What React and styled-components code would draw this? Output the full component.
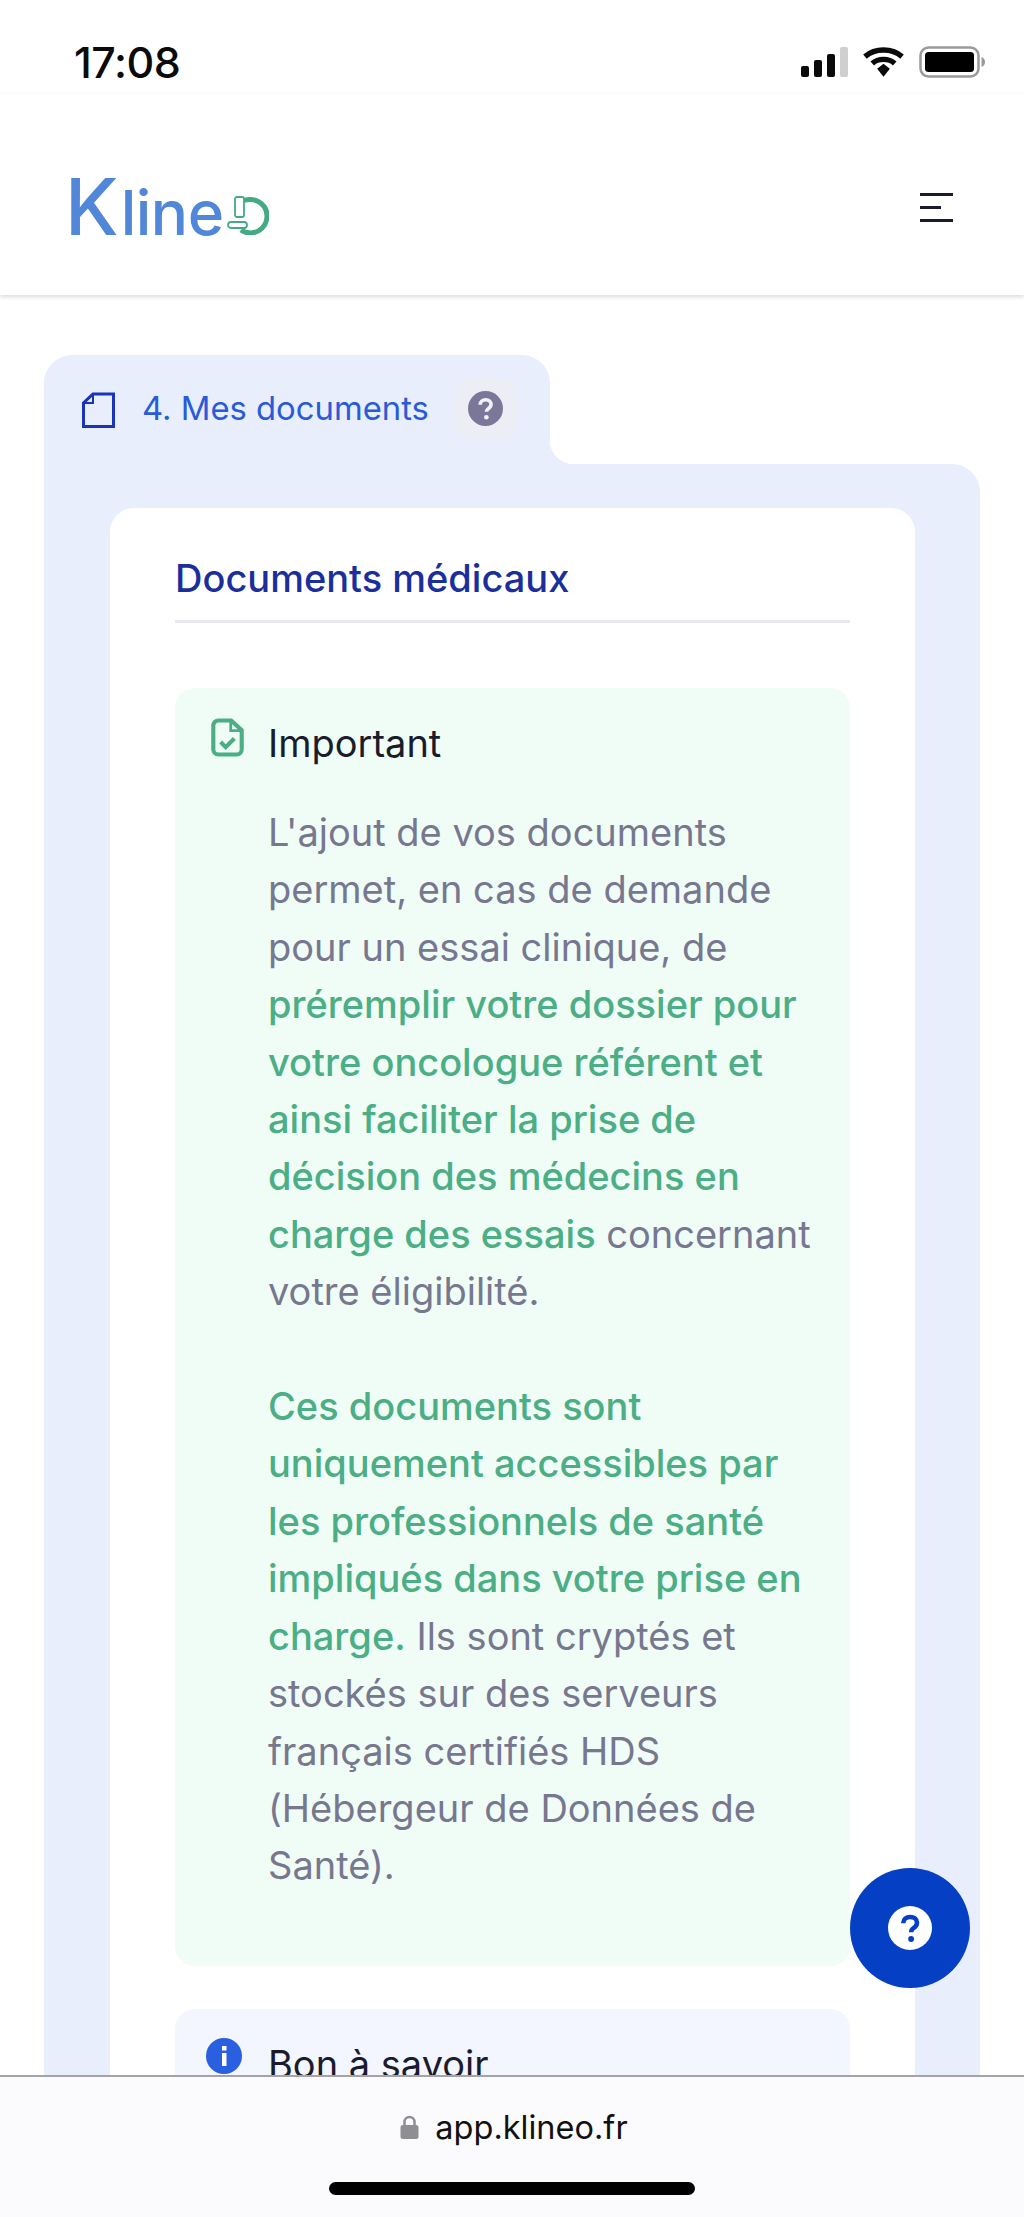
import styled, { createGlobalStyle } from 'styled-components'

const GlobalStyle = createGlobalStyle`
  html, body {
    margin: 0;
    padding: 0;
    background: #fff;
    font-family: Inter, "Liberation Sans", sans-serif;
  }
`

const Screen = styled.div`
  position: relative;
  width: 1024px;
  height: 2217px;
  overflow: hidden;
  background: #fff;
`

const StatusBar = styled.div`
  display: flex;
  justify-content: space-between;
  align-items: center;
  height: 62px;
  padding: 31px 39px 1px 74px;
  box-sizing: content-box;
`

const Clock = styled.span`
  font-size: 43px;
  font-weight: 500;
  color: #0a0a0a;
  letter-spacing: -0.5px;
`

const StatusIcons = styled.div`
  display: flex;
  align-items: center;
  gap: 15px;
`

const Header = styled.header`
  display: flex;
  justify-content: space-between;
  align-items: center;
  height: 201px;
  padding: 0 70px;
  box-shadow: 0 2px 4px rgba(40, 40, 60, 0.16);
`

const Logo = styled.div`
  display: flex;
  align-items: baseline;
  margin-top: 30px;
  margin-left: -5px;
  color: #5187d9;
`

const LogoInitial = styled.span`
  font-size: 78px;
  line-height: 78px;
  font-weight: 500;
  margin-right: 2px;
`

const LogoText = styled.span`
  font-size: 62px;
  line-height: 78px;
  font-weight: 500;
  letter-spacing: -0.5px;
`

const LogoMark = styled.svg`
  margin-left: 3px;
`

const MenuButton = styled.button`
  display: flex;
  flex-direction: column;
  gap: 10px;
  width: 33px;
  padding: 0;
  border: 0;
  background: none;
  margin-right: 1px;
  margin-top: 26px;
`

const MenuLine = styled.span`
  display: block;
  height: 3px;
  width: ${p => p.$short ? '21px' : '33px'};
  background: #1b1b2e;
`

const Main = styled.main`
  padding: 60px 44px 0 44px;
`

const Tab = styled.div`
  position: relative;
  display: flex;
  width: 506px;
  height: 109px;
  box-sizing: border-box;
  padding: 22px 0 0 38px;
  align-items: flex-start;
  background: #e8eefb;
  border-radius: 28px 28px 0 0;

  &::after {
    content: '';
    position: absolute;
    left: 100%;
    bottom: 0;
    width: 24px;
    height: 24px;
    background: radial-gradient(circle at 100% 0, transparent 24px, #e8eefb 24.5px);
  }
`

const TabTitle = styled.span`
  margin: 0 24px 0 27px;
  font-size: 32.8px;
  line-height: 63px;
  color: #2a5bd6;
  white-space: nowrap;
`

const HelpButton = styled.span`
  display: flex;
  align-items: center;
  justify-content: center;
  width: 65px;
  height: 63px;
  border-radius: 20px;
  background: #ecedf5;
`

const DocIcon = styled.svg`
  margin-top: 15px;
  flex-shrink: 0;
`

const Panel = styled.section`
  background: #e8eefb;
  border-radius: 0 28px 0 0;
  padding: 44px 65px 0 66px;
  height: 1700px;
`

const Card = styled.div`
  background: #fff;
  border-radius: 24px 24px 0 0;
  padding: 46px 65px 0 65px;
  height: 1700px;
`

const CardTitle = styled.h2`
  margin: 0;
  padding-bottom: 18px;
  font-size: 38px;
  line-height: 48px;
  font-weight: 500;
  color: #1a2f9c;
  border-bottom: 3px solid #e6e8ee;
`

const Notice = styled.div`
  display: grid;
  grid-template-columns: 36px 1fr;
  column-gap: 21px;
  margin-top: ${p => p.$first ? '65px' : '43px'};
  padding: ${p => p.$first ? '29px 30px 71px 36px' : '29px 30px 30px 31px'};
  background: ${p => p.$tone === 'green' ? '#effdf6' : '#f3f6fe'};
  border-radius: 20px;
`

const NoticeTitle = styled.h3`
  margin: 0;
  padding-left: ${p => p.$tone === 'blue' ? '5px' : '0'};
  font-size: 38px;
  line-height: 52px;
  font-weight: 400;
  color: #1b1b2e;
`

const NoticeBody = styled.p`
  grid-column: 2;
  margin: 35px 0 0 0;
  font-size: 38px;
  line-height: 57.4px;
  color: #77778f;
`

const Highlight = styled.strong`
  font-weight: 500;
  color: #4bae84;
`

const Fab = styled.button`
  position: absolute;
  left: 850px;
  top: 1868px;
  display: flex;
  align-items: center;
  justify-content: center;
  width: 120px;
  height: 120px;
  padding: 0;
  border: 0;
  border-radius: 50%;
  background: #0540c4;
`

const BrowserBar = styled.div`
  position: absolute;
  left: 0;
  right: 0;
  bottom: 0;
  height: 142px;
  box-sizing: border-box;
  display: flex;
  flex-direction: column;
  align-items: center;
  background: #fbfbfd;
  border-top: 2px solid #a3a3a8;
`

const Address = styled.div`
  display: flex;
  align-items: center;
  gap: 16px;
  height: 68px;
  margin: 16px 0 0 4px;
  font-size: 32.5px;
  color: #111;
`

const HomeIndicator = styled.div`
  width: 366px;
  height: 13px;
  margin-top: 21px;
  border-radius: 7px;
  background: #000;
`

const HelpGlyph = ({ size, bg, fg }) => (
  <svg width={size} height={size} viewBox="0 0 24 24">
    <circle cx="12" cy="12" r="12" fill={bg} />
    <path d="M8.3 9.4c.1-2.2 1.7-3.4 3.800-3.400 2.200 0 3.700 1.300 3.700 3.100 0 1.400-.7 2.200-1.900 3-.9.6-1.200 1-1.200 1.900v.3" fill="none" stroke={fg} strokeWidth="2.500" />
    <circle cx="12.600" cy="18" r="1.600" fill={fg} />
  </svg>
)

export default function App () {
  return (
    <Screen>
      <GlobalStyle />
      <StatusBar>
        <Clock>17:08</Clock>
        <StatusIcons>
          <svg width="47" height="30" viewBox="0 0 47 30">
            <rect x="0" y="19" width="8" height="11" rx="2" fill="#0a0a0a" />
            <rect x="13" y="13" width="8" height="17" rx="2" fill="#0a0a0a" />
            <rect x="26" y="7" width="8" height="23" rx="2" fill="#0a0a0a" />
            <rect x="39" y="0" width="8" height="30" rx="2" fill="#cfcfcf" />
          </svg>
          <svg width="41" height="30" viewBox="0 0 42 30">
            <path d="M2 9.500C12.500 .5 29.500 .5 40 9.500" fill="none" stroke="#0a0a0a" strokeWidth="5.500" />
            <path d="M9.500 16.500C15.500 11 26.500 11 32.500 16.500" fill="none" stroke="#0a0a0a" strokeWidth="5.500" />
            <path d="M14.500 22L21 16.800 27.500 22 21 30z" fill="#0a0a0a" />
          </svg>
          <svg width="66" height="32" viewBox="0 0 66 32">
            <rect x="1.500" y="1.500" width="58" height="29" rx="8" fill="none" stroke="#9a9a9a" strokeWidth="2.500" />
            <rect x="6" y="6" width="49" height="20" rx="3.500" fill="#000" />
            <path d="M62.500 11c2 .5 3.500 2.500 3.500 5s-1.500 4.500-3.500 5z" fill="#9a9a9a" />
          </svg>
        </StatusIcons>
      </StatusBar>

      <Header>
        <Logo>
          <LogoInitial>K</LogoInitial>
          <LogoText>line</LogoText>
          <LogoMark width="42" height="39" viewBox="0 0 42 39">
            <path d="M17 4.500C27 1 40 7 40 20c0 10-8 17-16.500 17-4 0-7-1-9.500-3" fill="none" stroke="#43aa82" strokeWidth="5" />
            <rect x="8" y="1" width="9" height="20" rx="2" fill="#fff" stroke="#43aa82" strokeWidth="1.800" />
            <rect x="1" y="26" width="19" height="6" rx="3" fill="#fff" stroke="#43aa82" strokeWidth="1.800" />
          </LogoMark>
        </Logo>
        <MenuButton aria-label="Menu">
          <MenuLine />
          <MenuLine $short />
          <MenuLine />
        </MenuButton>
      </Header>

      <Main>
        <Tab>
          <DocIcon width="33" height="36" viewBox="0 0 33 36">
            <path d="M11 2H31.500V34.500H1.500V11z" fill="none" stroke="#1a34b8" strokeWidth="3" />
            <path d="M11 2V11H1.500" fill="none" stroke="#1a34b8" strokeWidth="2" />
          </DocIcon>
          <TabTitle>4. Mes documents</TabTitle>
          <HelpButton><HelpGlyph size={35} bg="#7a7799" fg="#f1f1f5" /></HelpButton>
        </Tab>
        <Panel>
          <Card>
            <CardTitle>Documents médicaux</CardTitle>
            <Notice $first $tone="green">
              <svg width="33" height="41" viewBox="0 0 36 42">
                <path d="M22 2.500H8A5.500 5.500 0 0 0 2.500 8v26A5.500 5.500 0 0 0 8 39.500h20a5.500 5.500 0 0 0 5.500-5.500V13z" fill="none" stroke="#4bae84" strokeWidth="4.500" />
                <path d="M21.500 3V13.500H33" fill="none" stroke="#4bae84" strokeWidth="3" />
                <path d="M10.500 26l5.500 5.500 9.500-9.500" fill="none" stroke="#4bae84" strokeWidth="4.500" />
              </svg>
              <NoticeTitle>Important</NoticeTitle>
              <NoticeBody>
                L'ajout de vos documents permet, en cas de demande pour un essai clinique, de{' '}
                <Highlight>préremplir votre dossier pour votre oncologue référent et ainsi faciliter la prise de décision des médecins en charge des essais</Highlight>{' '}
                concernant votre éligibilité.
                <br /><br />
                <Highlight>Ces documents sont uniquement accessibles par les professionnels de santé impliqués dans votre prise en charge.</Highlight>{' '}
                Ils sont cryptés et stockés sur des serveurs français certifiés HDS (Hébergeur de Données de Santé).
              </NoticeBody>
            </Notice>
            <Notice $tone="blue">
              <svg width="36" height="36" viewBox="0 0 36 36">
                <circle cx="18" cy="18" r="18" fill="#2a5fe0" />
                <rect x="16" y="15" width="4.500" height="13" fill="#fff" />
                <rect x="16" y="8" width="4.500" height="4.500" fill="#fff" />
              </svg>
              <NoticeTitle $tone="blue">Bon à savoir</NoticeTitle>
            </Notice>
          </Card>
        </Panel>
      </Main>

      <Fab aria-label="Aide"><HelpGlyph size={44} bg="#fff" fg="#0540c4" /></Fab>

      <BrowserBar>
        <Address>
          <svg width="19" height="24" viewBox="0 0 19 24">
            <path d="M4.500 11V7a5 5 0 0 1 10 0v4" fill="none" stroke="#8e8e93" strokeWidth="2.500" />
            <rect x="0.500" y="10" width="18" height="14" rx="2.500" fill="#8e8e93" />
          </svg>
          app.klineo.fr
        </Address>
        <HomeIndicator />
      </BrowserBar>
    </Screen>
  )
}
